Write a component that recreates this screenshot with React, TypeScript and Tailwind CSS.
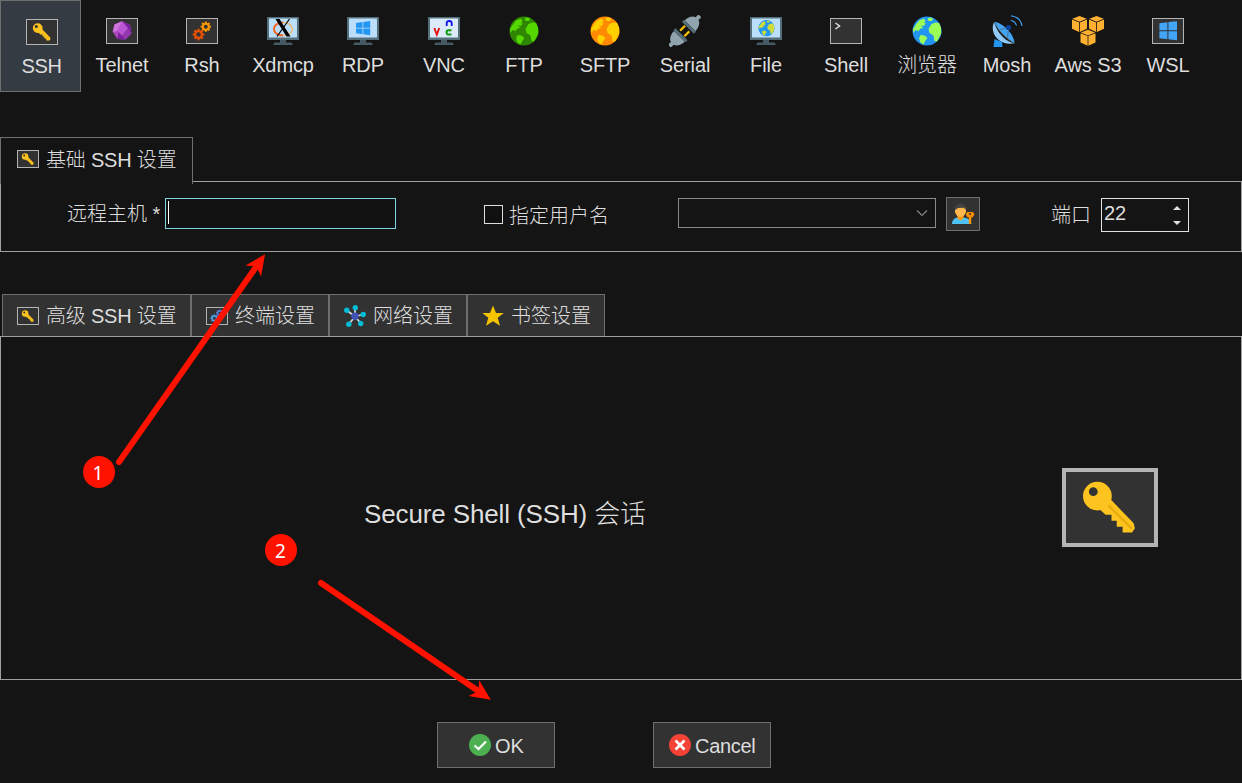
import type { ReactNode } from "react";

function KeyArt() {
  return (
    <g transform="translate(-.3 -.5)">
      <path
        fill="#fdc41f"
        d="M16 10.2 24.3 18.8 24.8 20.6 23.8 22H20.6V20.1H18.6V18H16.8V16H14.8L12.8 14.2Z"
      />
      <path stroke="#e9ad10" strokeWidth="0.9" d="M15.6 12.6 23.8 20.8" />
      <path
        fill="#fdc41f"
        fillRule="evenodd"
        d="M12 4.7a4.9 4.9 0 1 0 0 9.8a4.9 4.9 0 1 0 0-9.8M10.6 6.6a1.5 1.5 0 1 1 0 3a1.5 1.5 0 1 1 0-3"
      />
    </g>
  );
}

function Gear({ x, y, r, color }: { x: number; y: number; r: number; color: string }) {
  return (
    <g transform={`translate(${x} ${y})`} fill="none" stroke={color}>
      <circle r={r * 0.62} strokeWidth={r * 0.42} />
      {[0, 45, 90, 135, 180, 225, 270, 315].map((a) => (
        <path key={a} transform={`rotate(${a})`} strokeWidth={r * 0.4} d={`M${r * 0.7} 0H${r * 1.08}`} />
      ))}
    </g>
  );
}

function Frame({ className, children }: { className: string; children?: ReactNode }) {
  return (
    <div className={`shrink-0 border-[#b4b4b4] bg-[#323232] ${className}`}>
      <svg viewBox="1 1 30 24" className="block h-full w-full" fill="none">
        {children}
      </svg>
    </div>
  );
}

function ToolFrame({ children }: { children?: ReactNode }) {
  return <Frame className="mt-[3px] h-[26px] w-8 border">{children}</Frame>;
}

function Windows() {
  return (
    <path
      fill="#42a5f5"
      d="M7.4 5.2 15.4 4.2V12.2H7.4ZM16.4 4.1 25 3.2V12.2H16.4ZM7.4 13.2H15.4V21.2L7.4 20.2ZM16.4 13.2H25V22.2L16.4 21.2Z"
    />
  );
}

function Svg({ children }: { children: ReactNode }) {
  return (
    <svg viewBox="0 0 32 32" className="block h-8 w-8" fill="none">
      {children}
    </svg>
  );
}

function Monitor({ screen = "#bbdefb", children }: { screen?: string; children: ReactNode }) {
  return (
    <Svg>
      <rect y="2" width="32" height="23" fill="#546e7a" />
      <rect x="2" y="3.5" width="28" height="19" fill={screen} />
      <path fill="#455a64" d="M13 25H19V27.5H24.5L26 30H6L7.500 27.500H13Z" />
      {children}
    </Svg>
  );
}

function Globe({ sea, land }: { sea: string; land: string }) {
  return (
    <g>
      <circle cx="16" cy="16" r="14.5" fill={sea} />
      <g fill={land}>
        <path d="M5 9.500 8 5.500 13 3.500 14.500 6 13 8 15 8.500 12.500 11 9.500 10.500 12.500 13 9.500 13.500 7.500 16 4.500 15 2.500 18 2 14Z" />
        <path d="M16.500 3.500 19 2.500 22 3.500 21 6 17.500 6Z" />
        <path d="M9.500 20 13.500 20.500 16.500 23 14.500 25.500 12.500 29.500 9.500 27.500 8 23.500Z" />
        <path d="M20.500 9 24.500 7.500 28 8 30 12.500 30.300 18 28.500 22 26 26.500 23.500 26 22.500 20.500 18.500 18 17.500 14Z" />
      </g>
    </g>
  );
}

function Cube({ x, y }: { x: number; y: number }) {
  return (
    <g transform={`translate(${x} ${y})`} fill="#ffb030">
      <path d="M7.500 0 14.700 2.800 7.500 5.700 .3 2.800Z" />
      <path d="M0 3.500 7.100 6.400V16L0 12.800Z" />
      <path d="M15 3.500 7.900 6.400V16L15 12.800Z" />
    </g>
  );
}

const sessions: { name: string; icon: ReactNode }[] = [
  {
    name: "Telnet",
    icon: (
      <ToolFrame>
        <path fill="#ab47bc" d="M16 3.300 24 7 25.500 15.500 19.500 21.500 11.500 21 6.700 14 8.500 6.500Z" />
        <path fill="#ce74dc" d="M16 3.300 8.500 6.500 6.700 14 13 12.500Z" />
        <path fill="#7b1fa2" d="M20.500 11 25.500 15.500 24 7 16 3.300ZM13 12.500 16 17.500 19.500 21.500 11.500 21Z" />
        <path fill="#ba55d3" d="M16 3.300 22 10 16 17.500 11 12.500Z" />
        <path fill="#9238ae" d="M22 10 25.500 15.500 19.500 21.500 16 17.500Z" />
      </ToolFrame>
    ),
  },
  {
    name: "Rsh",
    icon: (
      <ToolFrame>
        <Gear x={19.800} y={8.700} r={4.800} color="#ff9800" />
        <Gear x={12.500} y={16.500} r={5.400} color="#e65100" />
      </ToolFrame>
    ),
  },
  {
    name: "Xdmcp",
    icon: (
      <Monitor>
        <ellipse cx="16" cy="14" rx="9.500" ry="6.500" stroke="#f5b85a" strokeWidth="1.200" />
        <path stroke="#f06020" strokeWidth="1.800" d="M16 7.500C4 7.500 4 20.500 16 20.500" />
        <path fill="#000" d="M8.500 4H12.500L23.500 21.500H19.500Z" />
        <path stroke="#000" strokeWidth="1.200" d="M22.500 4 10 21.500" />
      </Monitor>
    ),
  },
  {
    name: "RDP",
    icon: (
      <Monitor>
        <path
          fill="#2196f3"
          d="M9 8 15.500 7V12.700H9ZM16.300 6.900 23.200 6V12.700H16.300ZM9 13.500H15.500V19.200L9 18.200ZM16.300 13.500H23.200V20.200L16.300 19.300Z"
        />
      </Monitor>
    ),
  },
  {
    name: "VNC",
    icon: (
      <Monitor screen="#dbebfa">
        <path stroke="#e81010" strokeWidth="1.900" d="M6.300 13 8.800 19.500 11.300 13" />
        <path stroke="#1010f0" strokeWidth="1.800" d="M18.700 11V8Q18.700 6 21.200 6T23.700 8V11" />
        <path stroke="#109a10" strokeWidth="2" d="M23.500 15.300H20.500Q18.600 15.300 18.600 17.500T20.500 19.500H23.500" />
      </Monitor>
    ),
  },
  { name: "FTP", icon: <Svg><Globe sea="#2e8500" land="#55d800" /></Svg> },
  { name: "SFTP", icon: <Svg><Globe sea="#ff8a00" land="#ffd000" /></Svg> },
  {
    name: "Serial",
    icon: (
      <Svg>
        <g transform="translate(15.700 16) rotate(45)">
          <path fill="#90a4ae" d="M-7.500-7.500V-10Q-6-16.500-2-17.500V-21.500H2V-17.500Q6-16.500 7.500-10V-7.500Z" />
          <path fill="#90a4ae" d="M-7.500 7.500V10Q-6 16.500-2 17.500V21.500H2V17.500Q6 16.500 7.500 10V7.500Z" />
          <path fill="#546e7a" d="M-8.500-7.500H8.500V-4.500H-8.500ZM-8.500 4.500H8.500V7.500H-8.500Z" />
          <path stroke="#ffc107" strokeWidth="2.200" d="M-3.500-4V3M3.500-3V4" />
        </g>
      </Svg>
    ),
  },
  {
    name: "File",
    icon: (
      <Monitor>
        <g transform="translate(7.500 4.200) scale(.56)">
          <Globe sea="#2196f3" land="#cddc39" />
        </g>
      </Monitor>
    ),
  },
  {
    name: "Shell",
    icon: (
      <ToolFrame>
        <path stroke="#eee" strokeWidth="1.200" d="M5.500 5 9.700 8 5.500 11" />
      </ToolFrame>
    ),
  },
  { name: "浏览器", icon: <Svg><Globe sea="#2196f3" land="#9cff57" /></Svg> },
  {
    name: "Mosh",
    icon: (
      <Svg>
        <path fill="#2196f3" d="M3.500 24 11 27 11.500 32H2.500Z" />
        <path fill="#42a5f5" d="M3.500 7C10 7 22 17 23.500 27.500 23 30 4 14 3.500 7Z" />
        <path fill="#90caf9" d="M3 7C-2 18 8 31 23.500 28.300 15 27 6 18 3 7Z" />
        <path stroke="#546e7a" strokeWidth=".9" d="M4 8Q10 21 23.500 28M8.500 14.500 17.500 12.500 16.500 24" />
        <circle cx="17.500" cy="12.500" r="2.600" fill="#0d3f9c" />
        <path stroke="#42a5f5" strokeWidth="1.100" d="M19.800 5.500Q24 6 25.500 10.500M19.800 .7Q29.500 2 31 11" />
      </Svg>
    ),
  },
  {
    name: "Aws S3",
    icon: (
      <Svg>
        <Cube x={0} y={1} />
        <Cube x={17} y={1} />
        <Cube x={8.500} y={14.700} />
      </Svg>
    ),
  },
  { name: "WSL", icon: <ToolFrame><Windows /></ToolFrame> },
];

function SettingsTab({ icon, label, className }: { icon: ReactNode; label: string; className: string }) {
  return (
    <div className={`flex h-[42px] items-center border border-b-0 border-[#6e6e6e] bg-[#323232] pl-3.5 ${className}`}>
      {icon}
      <span className="ml-[7px] whitespace-pre leading-6">{label}</span>
    </div>
  );
}

function Arrow({ x, y, angle, length }: { x: number; y: number; angle: number; length: number }) {
  return (
    <g transform={`translate(${x} ${y}) rotate(${angle})`}>
      <path stroke="#ff1200" strokeWidth="6" strokeLinecap="round" d={`M0 0H${length - 13}`} />
      <path fill="#ff1200" transform={`translate(${length} 0)`} d="M0 0-20.500-9.500-15 0-20.500 9.500Z" />
    </g>
  );
}

export default function App() {
  return (
    <div className="relative flex h-[783px] w-[1242px] flex-col overflow-hidden bg-[#141414] font-['Liberation_Sans','Noto_Sans_CJK_SC',sans-serif] text-[20px] font-light text-[#dedede]">
      <nav className="flex h-[92px] shrink-0">
        <div className="mr-px flex w-[81px] shrink-0 flex-col items-center border border-[#6e6e6e] bg-[#343b42] pt-[15px]">
          <div className="h-8 w-8 translate-x-px">
            <ToolFrame><KeyArt /></ToolFrame>
          </div>
          <span className="mt-1.5 translate-x-px tracking-[-0.4px] leading-6">SSH</span>
        </div>
        {sessions.map((s) => (
          <div key={s.name} className="flex w-20 shrink-0 flex-col items-center pt-[15px] even:mr-0 odd:mr-px first:mr-px">
            <div className="h-8 w-8">{s.icon}</div>
            <span className="mt-1.5 whitespace-nowrap tracking-[-0.1px] leading-6">{s.name}</span>
          </div>
        ))}
      </nav>

      <section className="mt-[45px] flex shrink-0 flex-col">
        <div className="z-10 -mb-[3px] flex h-[47px] w-[193px] items-center border border-b-0 border-[#6e6e6e] bg-[#141414] pb-[4px] pl-4">
          <Frame className="h-[18px] w-[22px] border"><KeyArt /></Frame>
          <span className="ml-[7px] mt-[2px] whitespace-pre tracking-[-0.2px] leading-6">基础 SSH 设置</span>
        </div>
        <div className="flex h-[71px] items-start border border-[#a0a0a0] pt-4">
          <span className="ml-[66px] mt-[4px] w-[98px] whitespace-pre leading-6">远程主机 *</span>
          <div className="h-[31px] w-[231px] shrink-0 border border-[#80d4e0] bg-[#121212] pl-0.5 pt-0.5">
            <div className="h-[23px] w-px bg-white" />
          </div>
          <div className="ml-[88px] mt-[7px] h-[19px] w-[19px] shrink-0 border border-[#dedede] bg-[#101010]" />
          <span className="ml-1.5 mt-[6px] w-[169px] leading-6">指定用户名</span>
          <div className="flex h-[30px] w-[258px] shrink-0 items-center justify-end border border-[#8a8a8a] pr-[7px]">
            <svg className="h-3 w-3" viewBox="0 0 12 12" fill="none">
              <path d="M1 3.500 6 8.500 11 3.500" stroke="#858585" strokeWidth="1.200" />
            </svg>
          </div>
          <div className="-mt-px ml-2.5 flex h-[34px] w-[34px] shrink-0 items-center justify-center border border-[#6e6e6e] bg-[#323232]">
            <svg className="h-6 w-6" viewBox="0 0 24 24" fill="none">
              <path fill="#4fc3f7" d="M1 22Q1 16.500 6.500 15.500H13Q19.500 16.500 20.500 22Z" />
              <path fill="#ff9800" d="M6.500 13H12.500V16.500L9.500 18.500 6.500 16.500Z" />
              <path fill="#ffb74d" d="M4 5.500H15V10Q13.500 15 9.500 15T4 10Z" />
              <path fill="#424242" d="M4 8V6Q5 1.500 9 1.500 15 1.500 15 8L12.500 5.500 7 6Z" />
              <path stroke="#ff9800" strokeWidth="2.400" d="M19 15V22" />
              <path fill="#fb8c00" fillRule="evenodd" d="M16 10H22L23.500 12.500 21.500 15.500H16.500L14.800 12.500ZM18 11.300H20V12.800H18Z" />
            </svg>
          </div>
          <span className="ml-[71px] mt-[5px] w-[50px] leading-6">端口</span>
          <div className="flex h-[34px] w-[88px] shrink-0 justify-between border border-[#e2e2e2] pl-0.5 pr-[7px]">
            <span className="mt-[2px] leading-6">22</span>
            <svg className="h-8 w-2" viewBox="0 0 8 32" fill="#dedede">
              <path d="M0 11 4 7 8 11ZM0 22H8L4 26Z" />
            </svg>
          </div>
        </div>
      </section>

      <section className="mt-[42px] flex shrink-0 flex-col">
        <div className="ml-0.5 flex">
          <SettingsTab
            className="w-[189px] tracking-[-0.2px]"
            label="高级 SSH 设置"
            icon={<Frame className="h-[18px] w-[22px] border"><KeyArt /></Frame>}
          />
          <SettingsTab
            className="w-[138px]"
            label="终端设置"
            icon={
              <Frame className="h-[18px] w-[22px] border">
                <Gear x={20} y={8.500} r={5} color="#5c7fe0" />
                <Gear x={12} y={16.500} r={5.500} color="#4fa3f0" />
              </Frame>
            }
          />
          <SettingsTab
            className="w-[138px]"
            label="网络设置"
            icon={
              <svg className="h-[22px] w-[22px]" viewBox="0 0 22 22" fill="none">
                <path stroke="#cfd8dc" strokeWidth="1.800" d="M11 11.500V3M11 11.500 3 5.500M11 11.500 19 9.500M11 11.500 5 19M11 11.500 17 18.500" />
                <circle cx="11" cy="11.200" r="3.700" fill="#3f51b5" />
                <g fill="#00bcd4">
                  <circle cx="11.300" cy="2.800" r="2.700" />
                  <circle cx="2.800" cy="5.300" r="2.700" />
                  <circle cx="19.200" cy="9.500" r="2.700" />
                  <circle cx="4.800" cy="19.300" r="2.700" />
                  <circle cx="16.700" cy="18.500" r="2.700" />
                </g>
              </svg>
            }
          />
          <SettingsTab
            className="w-[138px]"
            label="书签设置"
            icon={
              <svg className="h-[22px] w-[22px]" viewBox="0 0 22 22">
                <path fill="#f4c400" d="M11 .5 14 8H21.700L15.700 12.800 18 20.700 11 16.200 4 20.700 6.300 12.800 .3 8H8Z" />
              </svg>
            }
          />
        </div>
        <div className="flex h-[344px] items-center justify-between border border-[#a0a0a0] pl-[363px] pr-[83px]">
          <span className="mt-3 text-[26px] tracking-[-0.13px] leading-8">Secure Shell (SSH) 会话</span>
          <Frame className="-mt-px h-[79px] w-24 border-[4px]"><KeyArt /></Frame>
        </div>
      </section>

      <footer className="mt-[42px] flex gap-[98px] pl-[437px]">
        <button className="flex h-[46px] w-[118px] items-center border border-[#6e6e6e] bg-[#323232] pl-[31px]">
          <svg className="h-[22px] w-[22px]" viewBox="0 0 22 22" fill="none">
            <circle cx="11" cy="11" r="11" fill="#4caf50" />
            <path d="M5.500 11.500 9.500 15 17 7.500" stroke="#fff" strokeWidth="2.200" />
          </svg>
          <span className="ml-1 mt-0.5 leading-6">OK</span>
        </button>
        <button className="flex h-[46px] w-[118px] items-center border border-[#6e6e6e] bg-[#323232] pl-[15px]">
          <svg className="h-[22px] w-[22px]" viewBox="0 0 22 22" fill="none">
            <circle cx="11" cy="11" r="11" fill="#f44336" />
            <path d="M6.500 6.500 15.500 15.500M15.500 6.500 6.500 15.500" stroke="#fff" strokeWidth="2.600" />
          </svg>
          <span className="ml-1 mt-0.5 tracking-[-0.3px] leading-6">Cancel</span>
        </button>
      </footer>

      <svg className="pointer-events-none absolute inset-0 z-20 h-full w-full" viewBox="0 0 1242 783" fill="none">
        <Arrow x={119} y={462} angle={-54.900} length={254} />
        <Arrow x={321} y={583} angle={34.500} length={206} />
      </svg>
      <div className="absolute left-[83px] top-[456px] z-20 flex h-8 w-8 items-center justify-center rounded-full bg-[#ff1200] pr-0.5 pt-0.5 font-['Noto_Sans',sans-serif] text-[19px] font-normal leading-6 text-white">
        1
      </div>
      <div className="absolute left-[265px] top-[534px] z-20 flex h-8 w-8 items-center justify-center rounded-full bg-[#ff1200] pr-px pt-0.5 font-['Noto_Sans',sans-serif] text-[19px] font-normal leading-6 text-white">
        2
      </div>
    </div>
  );
}
